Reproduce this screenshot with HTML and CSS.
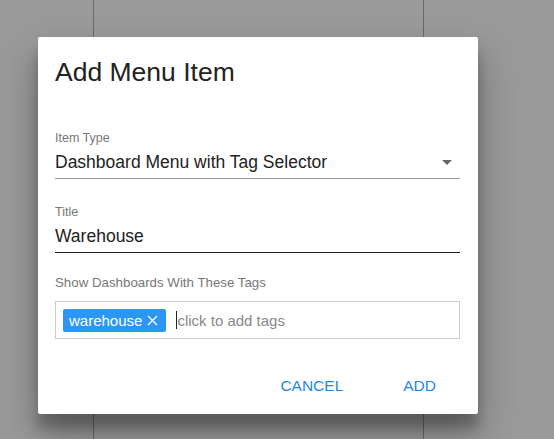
FILE: index.html
```html
<!DOCTYPE HTML>
<html>

<head>
	<meta charset="utf-8">
	<title>Menu Editor</title>
	<link rel="stylesheet" href="styles.css">
</head>
<body>

  <!-- columns of the editor behind the dialog -->
  <div class="page">
    <div class="col col-left"></div>
    <div class="col col-mid"></div>
    <div class="col col-right"></div>
  </div>

  <div class="overlay">
    <div class="dialog">
      <h3 class="dialog-title">Add Menu Item</h3>

      <div class="dialog-body">
        <div class="field field-type">
          <label class="field-label">Item Type</label>
          <div class="field-input select">
            <span>Dashboard Menu with Tag Selector</span>
            <span class="arrow"></span>
          </div>
        </div>

        <div class="field field-title">
          <label class="field-label">Title</label>
          <div class="field-input focused">Warehouse</div>
        </div>

        <div class="field">
          <label class="field-label tags-label">Show Dashboards With These Tags</label>
          <div class="tags">
            <span class="tag">warehouse
              <svg class="tag-remove" width="11" height="11" viewBox="0 0 11 11">
                <path d="M1 1L10 10M10 1L1 10" stroke="#fff" stroke-width="1.3" fill="none"/>
              </svg>
            </span>
            <span class="caret"></span>
            <span class="placeholder">click to add tags</span>
          </div>
        </div>
      </div>

      <div class="dialog-actions">
        <button class="btn">Cancel</button>
        <button class="btn">Add</button>
      </div>
    </div>
  </div>

</body>

</html>
```

FILE: styles.css
```css
body {
  margin: 0;
  height: 439px;
  overflow: hidden;
  background: #9a9a9a;
  font-family: "Liberation Sans", Arial, sans-serif;
}

.page {
  display: flex;
  height: 100%;
}

.col {
  height: 100%;
}

.col-left {
  width: 93px;
  border-right: 1px solid #6a6a6a;
}

.col-mid {
  width: 329px;
  border-right: 1px solid #6a6a6a;
}

.overlay {
  position: absolute;
  top: 0;
  left: 0;
  right: 0;
  bottom: 0;
  padding: 37px 0 0 38px;
}

.dialog {
  width: 440px;
  height: 377px;
  box-sizing: border-box;
  background: #fff;
  border-radius: 2px;
  box-shadow: 0 19px 38px rgba(0, 0, 0, .3), 0 15px 12px rgba(0, 0, 0, .22);
  display: flex;
  flex-direction: column;
}

.dialog-title {
  margin: 0;
  padding: 19px 17px 0;
  font-size: 26.5px;
  line-height: 32px;
  font-weight: normal;
  color: #222;
}

.dialog-body {
  padding: 0 18px 0 17px;
  margin-top: 43px;
}

.field-type {
  margin-bottom: 26px;
}

.field-title {
  margin-bottom: 23px;
}

.field-label {
  display: block;
  font-size: 12.5px;
  line-height: 14px;
  color: #777;
}

.tags-label {
  font-size: 13.3px;
}

.field-input {
  font-size: 17.5px;
  line-height: 22px;
  color: #222;
  padding: 6px 0 5px;
  border-bottom: 1px solid #999;
}

.field-input.focused {
  border-bottom-color: #222;
}

.select {
  display: flex;
  justify-content: space-between;
  align-items: center;
}

.arrow {
  width: 0;
  height: 0;
  margin-right: 8px;
  border-left: 5px solid transparent;
  border-right: 5px solid transparent;
  border-top: 5px solid #666;
}

.tags {
  margin-top: 11px;
  height: 38px;
  box-sizing: border-box;
  border: 1px solid #ccc;
  display: flex;
  align-items: center;
  padding: 0 7px;
  font-size: 15px;
}

.tag {
  display: flex;
  align-items: center;
  gap: 5px;
  background: #2b97f2;
  color: #fff;
  border-radius: 2px;
  padding: 3px 8px 3px 6px;
  line-height: 17px;
}

.caret {
  width: 1px;
  height: 18px;
  background: #222;
  margin-left: 10px;
}

.placeholder {
  color: #888;
}

.dialog-actions {
  margin-top: auto;
  display: flex;
  justify-content: flex-end;
  padding: 0 26px 12px 0;
}

.btn {
  border: none;
  background: none;
  font-family: inherit;
  font-size: 15.5px;
  line-height: 16px;
  text-transform: uppercase;
  color: #1e88e5;
  padding: 8px 16px;
  margin-left: 28px;
}
```
